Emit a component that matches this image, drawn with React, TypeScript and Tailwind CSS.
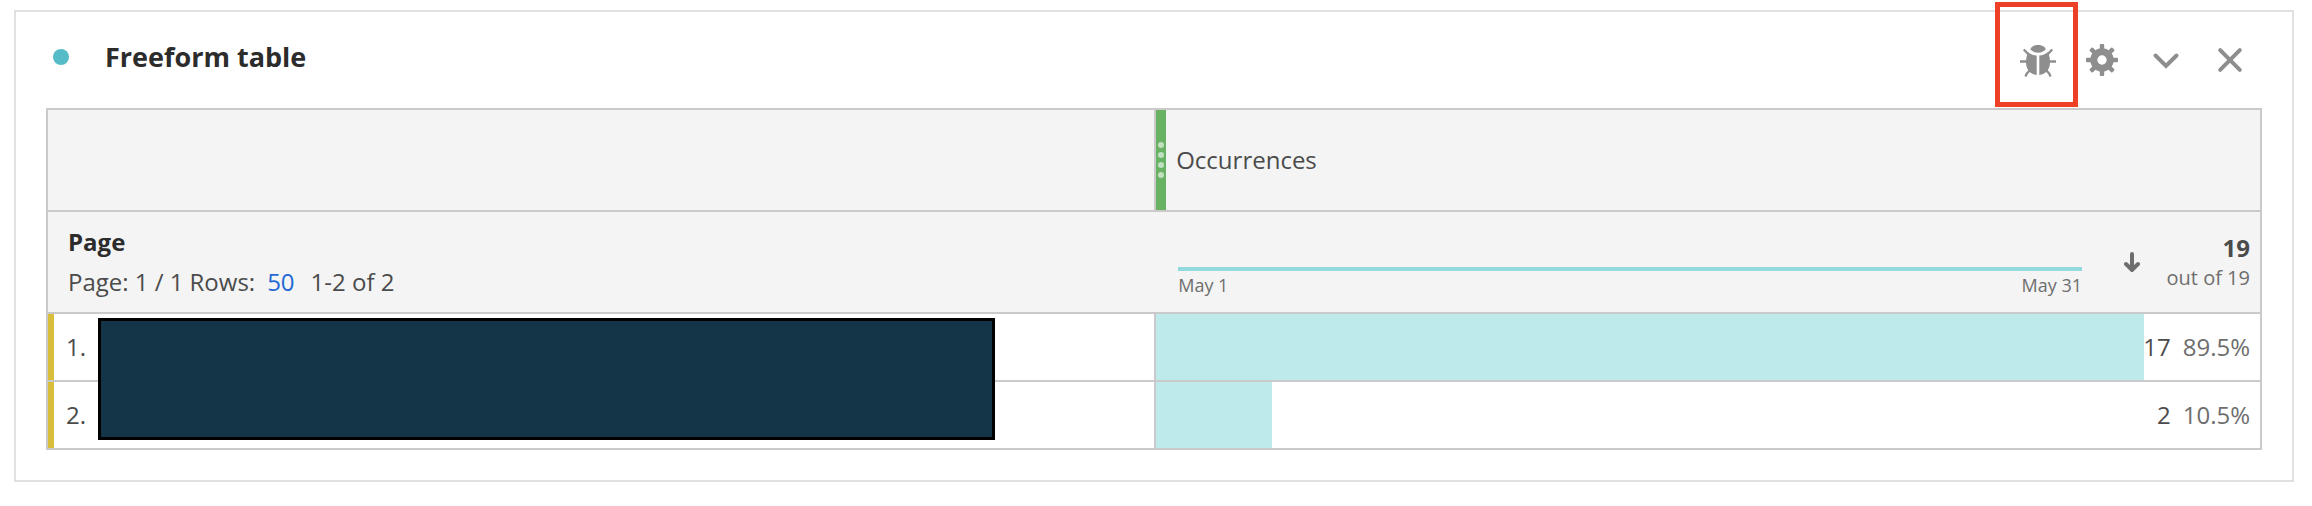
import React from 'react';

interface Row {
  index: number;
  count: number;
  percent: string;
  share: number;
}

const rows: Row[] = [
  { index: 1, count: 17, percent: '89.5%', share: 89.5 },
  { index: 2, count: 2, percent: '10.5%', share: 10.5 },
];

const gearTeeth = [0, 45, 90, 135, 180, 225, 270, 315];

function BugIcon() {
  return (
    <svg width="36" height="36" viewBox="0 0 36 36" aria-hidden="true">
      <path fill="#8e8e8e" d="M18 3c4.200 0 7 1.800 7.700 4.200C24 9.300 21.300 10.800 18 10.800S12 9.300 10.300 7.200C11 4.800 13.800 3 18 3z" />
      <path fill="#8e8e8e" d="M8.200 10.300C10.600 12.300 13.500 13.400 16.700 13.600V33C10.400 32.300 6 27.600 6 20.300c0-4 .8-7.400 2.200-10z" />
      <path fill="#8e8e8e" d="M27.800 10.300C25.400 12.300 22.500 13.400 19.300 13.600V33C25.600 32.300 30 27.600 30 20.300c0-4-.8-7.400-2.200-10z" />
      <g fill="none" stroke="#8e8e8e" strokeWidth="2.400">
        <path d="M3.800 7.500 9 13M32.200 7.500 27 13M0 19.500h8M36 19.500h-8" />
        <path d="M5.500 34.500 6.600 31.800 10.500 27.500M30.500 34.500 29.400 31.800 25.500 27.500" />
      </g>
    </svg>
  );
}

function GearIcon() {
  return (
    <svg width="32" height="32" viewBox="0 0 32 32" aria-hidden="true">
      <g fill="#8e8e8e">
        {gearTeeth.map((angle) => (
          <rect key={angle} x="13.800" y="0" width="4.400" height="8" rx="1" transform={`rotate(${angle} 16 16)`} />
        ))}
      </g>
      <circle cx="16" cy="16" r="8.200" fill="none" stroke="#8e8e8e" strokeWidth="7" />
    </svg>
  );
}

function ChevronIcon() {
  return (
    <svg width="32" height="32" viewBox="0 0 32 32" aria-hidden="true">
      <path d="M5.500 11.500 16 22 26.500 11.500" fill="none" stroke="#8e8e8e" strokeWidth="4" strokeLinecap="round" />
    </svg>
  );
}

function CloseIcon() {
  return (
    <svg width="32" height="32" viewBox="0 0 32 32" aria-hidden="true">
      <path d="M6.200 6.200 25.800 25.800M25.800 6.200 6.200 25.800" fill="none" stroke="#8e8e8e" strokeWidth="4" strokeLinecap="round" />
    </svg>
  );
}

function IconButton({ label, children }: { label: string; children: React.ReactNode }) {
  return (
    <button type="button" aria-label={label} className="relative flex h-full w-16 items-center justify-center">
      {children}
    </button>
  );
}

export default function App() {
  return (
    <div className="bg-white pt-2.5 pr-[18px] pb-6 pl-3.5 font-['Open_Sans','Noto_Sans',sans-serif] text-2xl text-[#4b4b4b]">
      <section className="border-2 border-[#e1e1e1] px-[30px] pb-[30px]">
        <header className="flex h-24 items-center justify-between">
          <div className="flex items-center pb-1.5 pl-[7px]">
            <span className="mr-9 size-4 rounded-full bg-[#55bcc7]" />
            <h2 className="text-[27px] font-bold text-[#2c2c2c]">Freeform table</h2>
          </div>
          <div className="flex h-full">
            <IconButton label="Debug">
              <BugIcon />
              <span className="absolute -top-2.5 -right-2 bottom-px -left-[11px] border-5 border-[#ee4026]" />
            </IconButton>
            <IconButton label="Settings">
              <GearIcon />
            </IconButton>
            <IconButton label="Collapse">
              <ChevronIcon />
            </IconButton>
            <IconButton label="Close">
              <CloseIcon />
            </IconButton>
          </div>
        </header>

        <table className="w-full table-fixed border-separate border-spacing-0 border-2 border-[#cacaca] text-left">
          <colgroup>
            <col className="w-[50.1%]" />
            <col />
          </colgroup>
          <thead className="bg-[#f4f4f4]">
            <tr>
              <td className="h-[102px] border-r-2 border-b-2 border-[#cacaca]" />
              <th scope="col" className="h-[102px] border-b-2 border-[#cacaca] p-0 font-normal">
                <div className="flex h-[100px] items-center">
                  <span className="mr-2.5 flex h-full w-2.5 flex-col items-center justify-center gap-1 bg-[#67b263]">
                    <i className="size-1.5 rounded-full bg-[#c1e0c0]" />
                    <i className="size-1.5 rounded-full bg-[#c1e0c0]" />
                    <i className="size-1.5 rounded-full bg-[#c1e0c0]" />
                    <i className="size-1.5 rounded-full bg-[#c1e0c0]" />
                  </span>
                  Occurrences
                </div>
              </th>
            </tr>
            <tr>
              <th scope="col" className="h-[102px] border-b-2 border-[#cacaca] py-0 pr-0 pl-5 font-normal">
                <div className="leading-10 font-bold text-[#2c2c2c]">Page</div>
                <div className="flex leading-10">
                  <span>Page: 1 / 1</span>
                  <span className="ml-1.5">Rows:</span>
                  <button type="button" className="mr-4 ml-3 text-[#2268d3]">50</button>
                  <span>1-2 of 2</span>
                </div>
              </th>
              <td className="h-[102px] border-b-2 border-[#cacaca] py-0 pr-2.5 pl-[22px]">
                <div className="flex items-center">
                  <div className="mt-[42px] flex-1 border-t-4 border-[#92dadd] text-lg leading-7 text-[#6e6e6e]">
                    <div className="flex justify-between">
                      <span>May 1</span>
                      <span>May 31</span>
                    </div>
                  </div>
                  <svg className="ml-[42px]" width="16" height="20" viewBox="0 0 16 20" aria-label="Sorted descending">
                    <path d="M8 2v14M2 12l6 6 6-6" fill="none" stroke="#6e6e6e" strokeWidth="4" strokeLinecap="round" />
                  </svg>
                  <div className="w-[110px] text-right">
                    <div className="leading-8 font-bold">19</div>
                    <div className="text-xl leading-7 text-[#6e6e6e]">out of 19</div>
                  </div>
                </div>
              </td>
            </tr>
          </thead>
          <tbody>
            {rows.map((row, i) => {
              const line = i < rows.length - 1 ? 'h-[68px] border-b-2' : 'h-[66px]';
              return (
                <tr key={row.index}>
                  <th scope="row" className={`${line} relative border-r-2 border-[#cacaca] p-0 font-normal`}>
                    <div className="flex h-[66px] items-center border-l-6 border-[#d8be3c] pl-3">{row.index}.</div>
                    {i === 0 && (
                      <div className="absolute top-1 right-[159px] left-[50px] z-10 h-[122px] border-3 border-black bg-[#143548]" />
                    )}
                  </th>
                  <td className={`${line} border-[#cacaca] p-0`}>
                    <div className="relative flex h-[66px] items-center justify-end pr-2.5">
                      <span className="absolute inset-y-0 left-0 bg-[#beeaec]" style={{ width: `${row.share}%` }} />
                      <span className="relative font-medium">{row.count}</span>
                      <span className="relative ml-3 text-[#6e6e6e]">{row.percent}</span>
                    </div>
                  </td>
                </tr>
              );
            })}
          </tbody>
        </table>
      </section>
    </div>
  );
}
